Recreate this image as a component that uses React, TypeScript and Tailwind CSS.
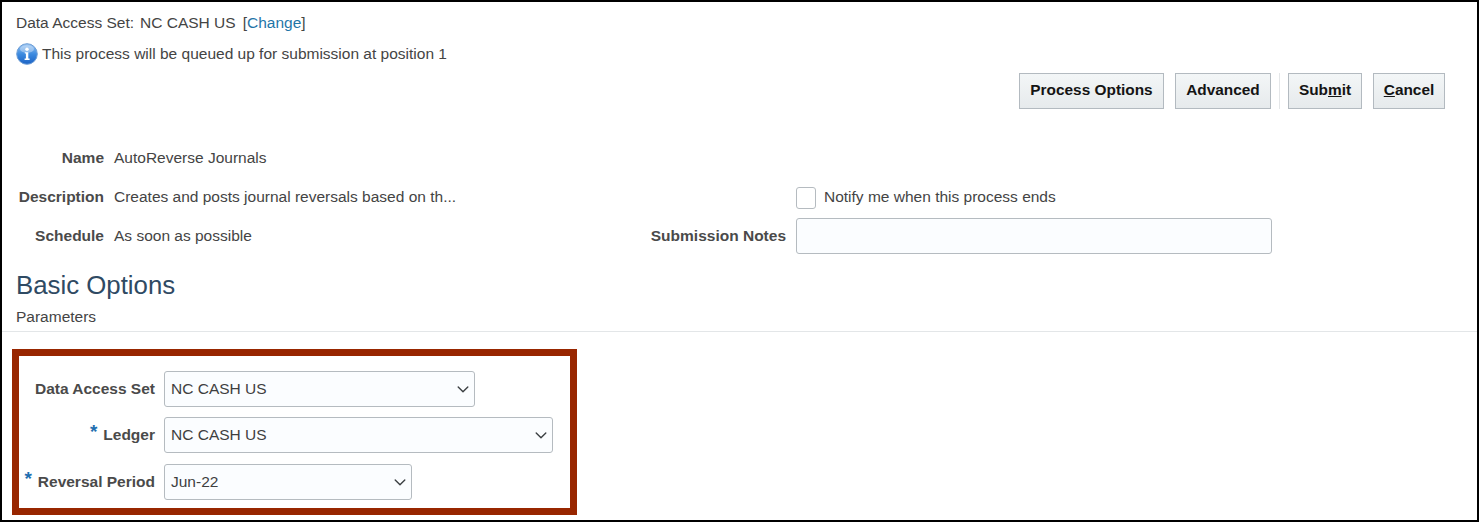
const font = "font-['Liberation_Sans',Arial,sans-serif]";

function Chevron() {
  return (
    <svg width="12" height="7" viewBox="0 0 12 7" fill="none" className="shrink-0">
      <path d="M1.2 1l4.8 4.8L10.8 1" stroke="#3c4043" strokeWidth="1.4" strokeLinecap="round" strokeLinejoin="round" />
    </svg>
  );
}

function Select({ value, width }: { value: string; width: string }) {
  return (
    <div className={`${width} h-[36px] flex items-center justify-between pl-[6px] pr-[5px] bg-[#fbfdff] border border-[#b5bbc0] rounded-[3px] text-[#3f3f3f]`}>
      <span>{value}</span>
      <Chevron />
    </div>
  );
}

function Btn({ children, width }: { children: React.ReactNode; width: string }) {
  return (
    <div className={`${width} h-[36px] pb-[2px] flex items-center justify-center border border-[#b3bac0] bg-gradient-to-b from-[#f3f6f7] to-[#e6eaec] font-bold text-[#141414] text-[15.4px]`}>
      {children}
    </div>
  );
}

function InfoIcon() {
  return (
    <svg width="22" height="22" viewBox="0 0 22 22" className="shrink-0">
      <defs>
        <linearGradient id="ig" x1="0" y1="0" x2="0" y2="1">
          <stop offset="0" stopColor="#9cc6f2" />
          <stop offset="0.5" stopColor="#3d8be0" />
          <stop offset="1" stopColor="#1c62c4" />
        </linearGradient>
      </defs>
      <circle cx="11" cy="11" r="10.3" fill="url(#ig)" stroke="#6e9ed6" strokeWidth="1" />
      <ellipse cx="11" cy="6" rx="7" ry="3.8" fill="#ffffff" opacity="0.35" />
      <circle cx="11" cy="6.3" r="1.7" fill="#ffffff" />
      <path d="M8.8 9.2h3.5v6.4H13.6v1.3H8.6v-1.3h1.3v-5.1H8.8z" fill="#ffffff" />
    </svg>
  );
}

function Label({ children }: { children: React.ReactNode }) {
  return <div className="text-right font-bold text-[#4a4a4a] whitespace-nowrap">{children}</div>;
}

const Star = () => <span className="text-[#1f6fb0] font-bold text-[19px] leading-none mr-[6px] relative top-[-2px]">*</span>;

function ParamRow({ label, children }: { label: React.ReactNode; children: React.ReactNode }) {
  return (
    <div className="flex items-center gap-[9px] h-[36px]">
      <div className="w-[136px]"><Label>{label}</Label></div>
      {children}
    </div>
  );
}

export default function App() {
  return (
    <div className={`${font} w-[1480px] h-[523px] bg-white text-[15.5px] text-[#444444] overflow-hidden`}>
      <div className="w-[1479px] h-[522px] border-2 border-black pl-[14px] pt-[12px] flex flex-col">
        <div className="h-[18px] flex items-center whitespace-nowrap">
          <span>Data Access Set:</span>
          <span className="ml-[6px]">NC CASH US</span>
          <span className="ml-[7px]">[<span className="text-[#1f76a8]">Change</span>]</span>
        </div>
        <div className="mt-[11px] h-[22px] flex items-center gap-[4px] whitespace-nowrap">
          <InfoIcon />
          <span>This process will be queued up for submission at position 1</span>
        </div>
        <div className="mt-[8px] h-[36px] flex justify-end pr-[32px]">
          <Btn width="w-[145px]">Process Options</Btn>
          <div className="ml-[11px]"><Btn width="w-[96px]">Advanced</Btn></div>
          <div className="ml-[8px] mr-[8px] w-px h-[36px] bg-[#e4e6e8]" />
          <Btn width="w-[74px]"><span>Sub<span className="underline">m</span>it</span></Btn>
          <div className="ml-[11px]"><Btn width="w-[72px]"><span><span className="underline">C</span>ancel</span></Btn></div>
        </div>
        <div className="mt-[29px] grid grid-cols-[88px_516px_146px_476px] grid-rows-[39px_39px_39px] gap-x-[10px] items-center">
          <Label>Name</Label>
          <div>AutoReverse Journals</div>
          <div />
          <div />
          <Label>Description</Label>
          <div>Creates and posts journal reversals based on th...</div>
          <div />
          <div className="flex items-center gap-[8px]">
            <div className="w-[20px] h-[22px] mt-[2px] bg-white border border-[#b5bbc0] rounded-[3px]" />
            <span>Notify me when this process ends</span>
          </div>
          <Label>Schedule</Label>
          <div>As soon as possible</div>
          <Label>Submission Notes</Label>
          <div className="h-[36px] bg-[#fbfdff] border border-[#b5bbc0] rounded-[3px]" />
        </div>
        <h2 className="mt-[14px] h-[32px] leading-[32px] text-[25.8px] text-[#2f4a63] font-normal">Basic Options</h2>
        <div className="mt-[7px] h-[18px] leading-[18px]">Parameters</div>
        <div className="mt-[5px] ml-[-14px] h-px bg-[#e3e6e8]" />
        <div className="mt-[17px] ml-[-4px] w-[565px] h-[166px] border-[7px] border-[#982600] pt-[15px] flex flex-col">
          <ParamRow label="Data Access Set"><Select value="NC CASH US" width="w-[311px]" /></ParamRow>
          <div className="mt-[10px]">
            <ParamRow label={<><Star />Ledger</>}><Select value="NC CASH US" width="w-[389px]" /></ParamRow>
          </div>
          <div className="mt-[11px]">
            <ParamRow label={<><Star />Reversal Period</>}><Select value="Jun-22" width="w-[248px]" /></ParamRow>
          </div>
        </div>
      </div>
    </div>
  );
}
